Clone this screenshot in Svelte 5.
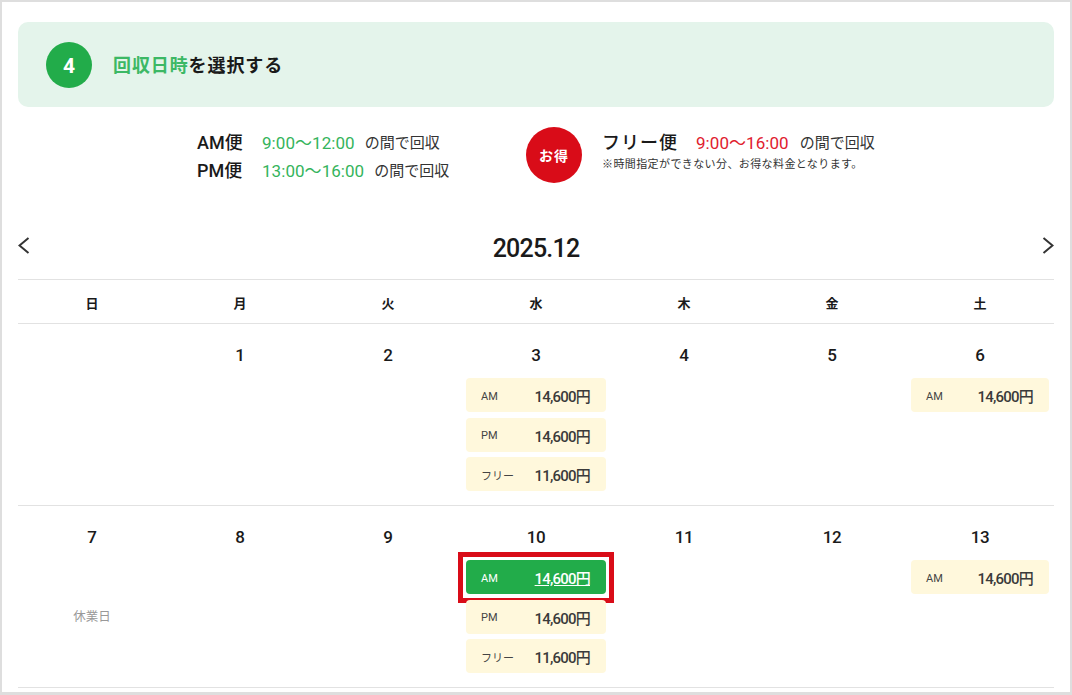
<script lang="ts">
  const weekdays = ['日', '月', '火', '水', '木', '金', '土'];

  const full = [
    { label: 'AM', price: '14,600円' },
    { label: 'PM', price: '14,600円' },
    { label: 'フリー', price: '11,600円' }
  ];
  const amOnly = [{ label: 'AM', price: '14,600円' }];

  const weeks = [
    [
      { day: '' },
      { day: '1' },
      { day: '2' },
      { day: '3', slots: full },
      { day: '4' },
      { day: '5' },
      { day: '6', slots: amOnly, end: true }
    ],
    [
      { day: '7', closed: true },
      { day: '8' },
      { day: '9' },
      { day: '10', slots: full, selected: 0 },
      { day: '11' },
      { day: '12' },
      { day: '13', slots: amOnly, end: true }
    ]
  ];
</script>

<div class="frame">
  <header class="step">
    <span class="step-num">4</span>
    <h2><em>回収日時</em>を選択する</h2>
  </header>

  <section class="times">
    <div class="times-col">
      <p class="time-row"><b>AM便</b><span class="hours">9:00〜12:00</span><span class="note">の間で回収</span></p>
      <p class="time-row"><b>PM便</b><span class="hours">13:00〜16:00</span><span class="note">の間で回収</span></p>
    </div>
    <div class="free">
      <span class="deal">お得</span>
      <div>
        <p class="time-row"><b class="free-name">フリー便</b><span class="hours red">9:00〜16:00</span><span class="note">の間で回収</span></p>
        <p class="free-note">※時間指定ができない分、お得な料金となります。</p>
      </div>
    </div>
  </section>

  <nav class="month">
    <svg width="12" height="17" viewBox="0 0 12 17" aria-hidden="true"><path d="M10.5 1 L1.5 8.5 L10.5 16" /></svg>
    <span>2025.12</span>
    <svg width="12" height="17" viewBox="0 0 12 17" aria-hidden="true"><path d="M1.5 1 L10.5 8.5 L1.5 16" /></svg>
  </nav>

  <div class="row head">
    {#each weekdays as w}
      <div class="wd">{w}</div>
    {/each}
  </div>

  {#each weeks as week}
    <div class="row week">
      {#each week as cell}
        <div class="cell" class:end={cell.end}>
          <div class="day">{cell.day}</div>
          {#if cell.closed}
            <div class="closed">休業日</div>
          {/if}
          {#each cell.slots ?? [] as slot, i}
            <div class="slot-wrap" class:picked={cell.selected === i}>
              <div class="slot">
                <span class="slot-label">{slot.label}</span>
                <span class="slot-price">{slot.price}</span>
              </div>
            </div>
          {/each}
        </div>
      {/each}
    </div>
  {/each}
</div>

<style>
  :global(body) {
    margin: 0;
    background: #fff;
  }

  .frame {
    box-sizing: border-box;
    width: 1072px;
    height: 695px;
    border: 2px solid #dedede;
    border-bottom-width: 3px;
    padding: 20px 16px 0;
    overflow: hidden;
    color: #1a1a1a;
    font-family: Roboto, 'Noto Sans CJK JP', 'Noto Sans', sans-serif;
  }

  p,
  h2 {
    margin: 0;
  }

  .step {
    display: flex;
    align-items: center;
    gap: 21px;
    height: 85px;
    padding-left: 28px;
    box-sizing: border-box;
    background: #e4f4eb;
    border-radius: 10px;
  }

  .step-num {
    display: flex;
    align-items: center;
    justify-content: center;
    width: 46px;
    height: 46px;
    padding-top: 3px;
    box-sizing: border-box;
    border-radius: 50%;
    background: #22ac4a;
    color: #fff;
    font-size: 21px;
    font-weight: 700;
  }

  h2 {
    margin-top: -1px;
    font-size: 18px;
    font-weight: 700;
    letter-spacing: 0.9px;
  }

  h2 em {
    font-style: normal;
    color: #3cb865;
  }

  .times {
    display: flex;
    height: 84px;
    padding: 22px 0 0 179px;
    box-sizing: border-box;
  }

  .times-col {
    width: 329px;
    display: flex;
    flex-direction: column;
    gap: 4px;
  }

  .time-row {
    display: flex;
    align-items: center;
    height: 24px;
    font-size: 17px;
  }

  .time-row b {
    font-weight: 500;
    font-size: 18px;
    width: 65px;
  }

  .time-row b.free-name {
    width: 94px;
    letter-spacing: 1px;
  }

  .hours {
    color: #35b45c;
    margin-right: 10px;
    letter-spacing: 0.05px;
  }

  .hours.red {
    color: #e0202e;
    margin-right: 11px;
  }

  .note {
    font-size: 15px;
    color: #333;
  }

  .free {
    display: flex;
    gap: 20px;
  }

  .deal {
    display: flex;
    align-items: center;
    justify-content: center;
    flex: none;
    width: 56px;
    height: 56px;
    margin-top: -2px;
    border-radius: 50%;
    background: #d90c18;
    color: #fff;
    font-size: 14px;
    font-weight: 700;
    letter-spacing: 1px;
  }

  .free-note {
    font-size: 11px;
    color: #333;
    letter-spacing: 0.4px;
    margin-top: 2px;
  }

  .month {
    display: flex;
    align-items: center;
    justify-content: space-between;
    height: 89px;
    padding-top: 20px;
    border-bottom: 1px solid #e2e2e2;
    box-sizing: border-box;
    font-size: 25px;
    font-weight: 500;
    letter-spacing: -0.8px;
  }

  .month span {
    padding-top: 7px;
  }

  .month svg path {
    fill: none;
    stroke: #333;
    stroke-width: 2;
  }

  .row {
    display: grid;
    grid-template-columns: repeat(7, 148px);
    border-bottom: 1px solid #e2e2e2;
  }

  .head {
    height: 44px;
    padding-top: 1px;
    box-sizing: border-box;
    align-items: center;
  }

  .wd {
    text-align: center;
    font-size: 13px;
    font-weight: 700;
  }

  .week {
    height: 182px;
    box-sizing: border-box;
  }

  .cell {
    display: flex;
    flex-direction: column;
    align-items: center;
  }

  .day {
    height: 54px;
    flex: none;
    padding-top: 19px;
    box-sizing: border-box;
    font-size: 17px;
    font-weight: 500;
    line-height: 24px;
    letter-spacing: -0.3px;
  }

  .closed {
    margin-top: 46px;
    font-size: 12.5px;
    color: #999;
  }

  .slot-wrap {
    width: 140px;
    height: 34px;
    margin-bottom: 5.5px;
    position: relative;
  }

  .end .slot-wrap {
    width: 138px;
  }

  .slot {
    display: flex;
    align-items: center;
    justify-content: space-between;
    height: 100%;
    padding: 0 16px 0 15px;
    box-sizing: border-box;
    background: #fff8dc;
    border-radius: 4px;
    color: #3a3a3a;
  }

  .slot-label {
    margin-top: 2px;
    font-size: 11px;
    color: #444;
  }

  .slot-price {
    margin-top: 1px;
    font-size: 15px;
    font-weight: 500;
    letter-spacing: -0.8px;
  }

  .picked .slot {
    background: #22ac4a;
    color: #fff;
  }

  .picked .slot-label {
    color: #fff;
  }

  .picked .slot-price {
    text-decoration: underline;
  }

  .picked::after {
    content: '';
    position: absolute;
    inset: -8px -8px -9px;
    border: 5px solid #d90c18;
    pointer-events: none;
  }
</style>
